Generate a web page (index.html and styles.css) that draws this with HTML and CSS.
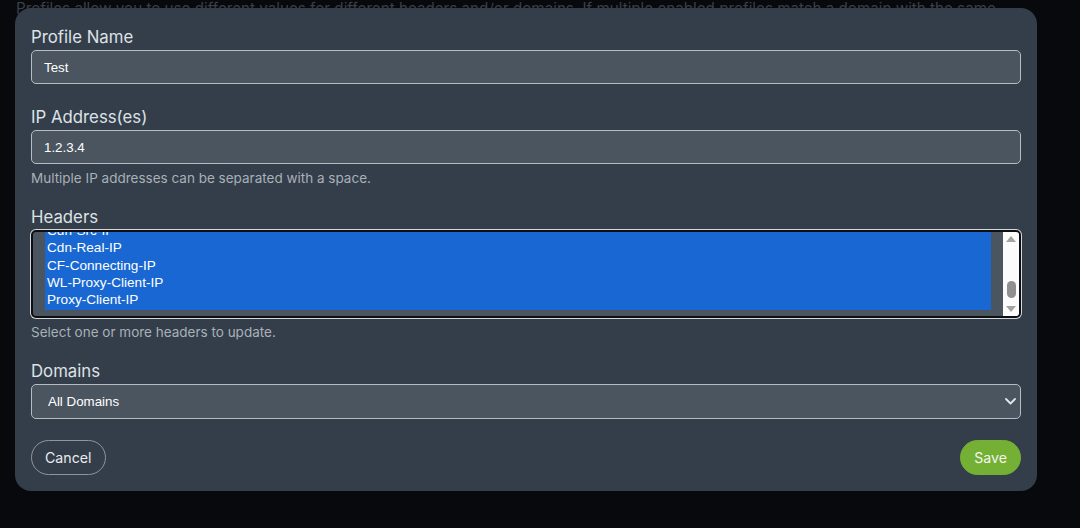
FILE: index.html
```html
<!DOCTYPE html>
<html lang="en">
<head>
<meta charset="utf-8">
<title>Edit Profile</title>
<link rel="stylesheet" href="styles.css">
</head>
<body>
<div class="page">
  <p class="intro">Profiles allow you to use different values for different headers and/or domains. If multiple enabled profiles match a domain with the same header, the first one wins.</p>
</div>
<div class="modal">
  <div class="group">
    <label class="field-label" for="pname">Profile Name</label>
    <input class="input" id="pname" type="text" value="Test">
  </div>
  <div class="group group-help">
    <label class="field-label" for="pip">IP Address(es)</label>
    <input class="input" id="pip" type="text" value="1.2.3.4">
    <div class="help">Multiple IP addresses can be separated with a space.</div>
  </div>
  <div class="group group-help">
    <div class="field-label">Headers</div>
    <div class="listbox">
      <div class="list-view">
        <div class="list">
          <div class="opt">Cdn-Src-IP</div>
          <div class="opt">Cdn-Real-IP</div>
          <div class="opt">CF-Connecting-IP</div>
          <div class="opt">WL-Proxy-Client-IP</div>
          <div class="opt">Proxy-Client-IP</div>
        </div>
      </div>
      <div class="scrollbar">
        <div class="sb-btn">
          <svg width="10" height="6" viewBox="0 0 10 6"><path d="M0 6 L5 0 L10 6 Z" fill="#a3a3a3"/></svg>
        </div>
        <div class="sb-track"><div class="sb-thumb"></div></div>
        <div class="sb-btn">
          <svg width="10" height="6" viewBox="0 0 10 6"><path d="M0 0 L10 0 L5 6 Z" fill="#a3a3a3"/></svg>
        </div>
      </div>
    </div>
    <div class="help">Select one or more headers to update.</div>
  </div>
  <div class="group-last">
    <div class="field-label">Domains</div>
    <div class="select">
      <span>All Domains</span>
      <svg class="chev" width="11" height="7" viewBox="0 0 11 7"><path d="M1 1 L5.5 5.5 L10 1" fill="none" stroke="#e3e6e9" stroke-width="1.8" stroke-linecap="round" stroke-linejoin="round"/></svg>
    </div>
  </div>
  <div class="footer">
    <button class="btn btn-cancel" type="button">Cancel</button>
    <button class="btn btn-save" type="button">Save</button>
  </div>
</div>
</body>
</html>
```

FILE: styles.css
```css
html, body {
  margin: 0;
  padding: 0;
}
body {
  background: #07090c;
  font-family: Inter, "Noto Sans", sans-serif;
  width: 1080px;
  height: 528px;
  overflow: hidden;
}
.page {
  padding: 0 16px;
}
.intro {
  margin: -3px 0 0;
  max-width: 990px;
  font-size: 15.2px;
  line-height: 24px;
  color: #3a3f45;
}
.modal {
  position: absolute;
  top: 8px;
  left: 15px;
  width: 1022px;
  box-sizing: border-box;
  padding: 16px;
  background: #343e4a;
  border-radius: 16px;
}
.field-label {
  display: block;
  font-size: 16.8px;
  line-height: 26px;
  color: #dee2e6;
  margin-bottom: 0;
}
.group {
  margin-bottom: 20px;
}
.group-help {
  margin-bottom: 16px;
}
.input {
  display: block;
  width: 100%;
  height: 34px;
  box-sizing: border-box;
  margin: 0;
  border: 1px solid #b6bcc2;
  border-radius: 5px;
  background: #4b5560;
  padding: 0 12px;
  font: 13.33px "Liberation Sans", Arial, sans-serif;
  color: #ffffff;
  outline: none;
}
.help {
  margin-top: 4px;
  font-size: 13.5px;
  line-height: 20px;
  color: #a8b0b8;
}
.listbox {
  display: flex;
  height: 88px;
  box-sizing: border-box;
  border: 2px solid #0d0f12;
  border-radius: 5px;
  box-shadow: 0 0 0 1px #d6d9dc;
  background: #4b5560;
  overflow: hidden;
}
.list-view {
  flex: 1;
  overflow: hidden;
  padding: 0 12px 8px;
}
.list {
  margin-top: -9px;
  background: #1967d2;
}
.opt {
  height: 17.33px;
  line-height: 17.33px;
  padding: 0 2px;
  font: 13.6px "Liberation Sans", Arial, sans-serif;
  color: #ffffff;
  white-space: nowrap;
}
.scrollbar {
  width: 16px;
  flex: none;
  background: #fbfbfb;
  display: flex;
  flex-direction: column;
}
.sb-btn {
  height: 14px;
  display: flex;
  align-items: center;
  justify-content: center;
}
.sb-track {
  flex: 1;
  display: flex;
  flex-direction: column;
  justify-content: flex-end;
  align-items: center;
  padding-bottom: 4px;
}
.sb-thumb {
  width: 9px;
  height: 17px;
  border-radius: 5px;
  background: #8f8f8f;
}
.select {
  height: 35px;
  box-sizing: border-box;
  border: 1px solid #b6bcc2;
  border-radius: 5px;
  background: #4b5560;
  padding: 0 4px 0 16px;
  display: flex;
  align-items: center;
  justify-content: space-between;
  font: 13.33px "Liberation Sans", Arial, sans-serif;
  color: #ffffff;
}
.chev {
  display: block;
}
.footer {
  margin-top: 21px;
  display: flex;
  justify-content: space-between;
}
.btn {
  height: 35px;
  box-sizing: border-box;
  border-radius: 18px;
  font-family: Inter, "Noto Sans", sans-serif;
  font-size: 14.2px;
  padding: 0 13px;
  margin: 0;
  cursor: pointer;
}
.btn-cancel {
  background: transparent;
  border: 1px solid #8e959c;
  color: #e8eaec;
}
.btn-save {
  background: #74b034;
  border: 1px solid #74b034;
  color: #f2f5ee;
}
```
